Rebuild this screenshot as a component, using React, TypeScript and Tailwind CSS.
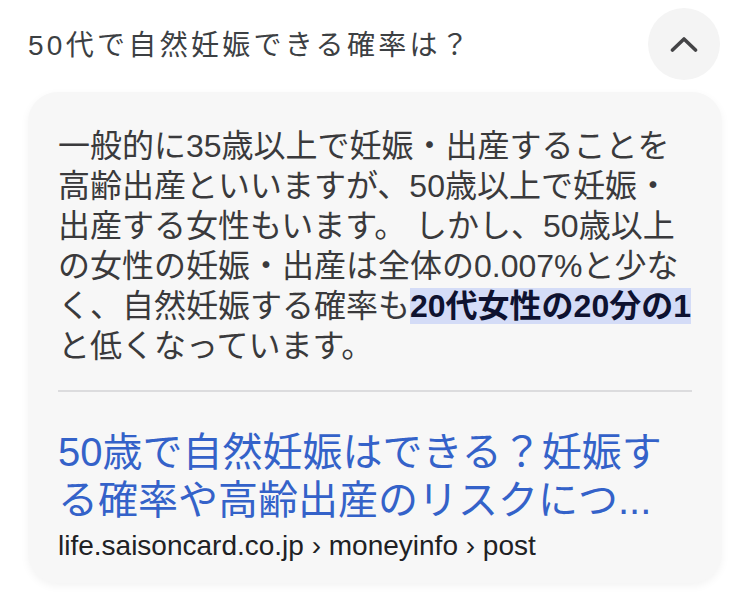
import React from 'react';

const FONT = '"Liberation Sans", "Noto Sans CJK JP", sans-serif';

function ChevronUp() {
    return (
        <svg width="28" height="16" viewBox="0 0 28 16" fill="none">
            <polyline
                points="2.5,14 14,3 25.5,14"
                stroke="#444446"
                strokeWidth="3.6"
                strokeLinecap="round"
                strokeLinejoin="round"
            />
        </svg>
    );
}

export default function App() {
    return (
        <div className="w-[750px] h-[612px] bg-white overflow-hidden" style={{ fontFamily: FONT }}>
            {/* Question header */}
            <div className="flex items-center justify-between h-[88px] pl-[28px] pr-[30px]">
                <h2 className="mt-[4px] text-[28px] leading-[36px] tracking-[3.3px] text-[#3c4043] font-normal">
                    50代で自然妊娠できる確率は？
                </h2>
                <button className="w-[72px] h-[72px] rounded-full bg-[#f4f4f4] flex items-center justify-center">
                    <ChevronUp />
                </button>
            </div>

            {/* Answer card */}
            <div className="mx-[28px] mt-[4px] rounded-[30px] bg-[#f7f7f7] shadow-[0_3px_8px_rgba(0,0,0,0.05)] px-[30px] pt-[34px] pb-[21px]">
                <p className="text-[32px] leading-[40px] text-[#3a3a3c] whitespace-nowrap">
                    一般的に35歳以上で妊娠・出産することを
                    <br />
                    高齢出産といいますが、50歳以上で妊娠・
                    <br />
                    出産する女性もいます。 しかし、50歳以上
                    <br />
                    の女性の妊娠・出産は全体の0.007%と少な
                    <br />
                    く、自然妊娠する確率も
                    <span className="font-bold text-[#0e1230] bg-[#d4dcf7]">20代女性の20分の1</span>
                    <br />
                    と低くなっています。
                </p>

                <div className="mt-[24px] h-[2px] bg-[#dcdcde]" />

                <div className="mt-[36px] text-[40px] leading-[48px] text-[#3462c9]">
                    50歳で自然妊娠はできる？妊娠する確率や高齢出産のリスクにつ...
                </div>
                <div className="mt-[6px] text-[28px] leading-[32px] text-[#202124]">
                    life.saisoncard.co.jp › moneyinfo › post
                </div>
            </div>
        </div>
    );
}
